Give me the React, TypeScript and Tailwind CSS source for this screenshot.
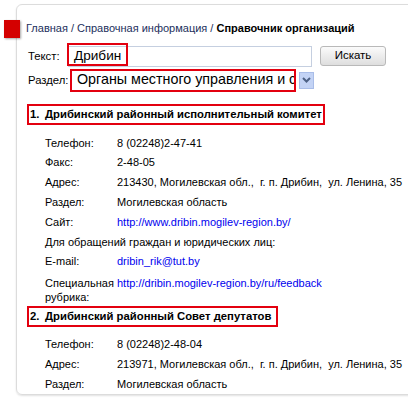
import React from 'react';

type Row = { label: string; value?: string; link?: boolean; full?: boolean };

const org1: Row[] = [
  { label: 'Телефон:', value: '8 (02248)2-47-41' },
  { label: 'Факс:', value: '2-48-05' },
  { label: 'Адрес:', value: '213430, Могилевская обл.,  г. п. Дрибин,  ул. Ленина, 35' },
  { label: 'Раздел:', value: 'Могилевская область' },
  { label: 'Сайт:', value: 'http://www.dribin.mogilev-region.by/', link: true },
  { label: 'Для обращений граждан и юридических лиц:', full: true },
  { label: 'E-mail:', value: 'dribin_rik@tut.by', link: true },
];

const org2: Row[] = [
  { label: 'Телефон:', value: '8 (02248)2-48-04' },
  { label: 'Адрес:', value: '213971, Могилевская обл.,  г. п. Дрибин,  ул. Ленина, 35' },
  { label: 'Раздел:', value: 'Могилевская область' },
];

function InfoRow({ row }: { row: Row }) {
  if (row.full) {
    return <div className="h-[19.8px] flex items-center pl-[28px] whitespace-pre">{row.label}</div>;
  }
  return (
    <div className="h-[19.8px] flex items-center">
      <div className="w-[100px] pl-[28px] shrink-0">{row.label}</div>
      <div className={`whitespace-pre ${row.link ? 'text-[#0000ee]' : ''}`}>{row.value}</div>
    </div>
  );
}

function Heading({ num, title, width }: { num: string; title: string; width: string }) {
  return (
    <div className={`ml-[10px] h-[21px] border-2 border-[#e3000f] flex items-center pl-[1px] font-bold text-[11.3px] whitespace-nowrap ${width}`}>
      <span className="w-[15px] shrink-0">{num}</span>
      <span>{title}</span>
    </div>
  );
}

export default function App() {
  return (
    <div className="w-[408px] h-[399px] bg-white overflow-hidden text-[11px] text-black" style={{ fontFamily: '"Liberation Sans", Arial, sans-serif' }}>
      <div className="pt-[4px] pl-[16px] relative">
        {/* red marker over the panel edge */}
        <div className="absolute left-[4px] top-[20px] w-[16px] h-[18px] bg-[#d40000] shadow-[1px_1px_2px_rgba(0,0,0,0.35)]" />
        <div className="h-[391px] w-[420px] border border-[#dcdcdc] rounded-[6px] shadow-[0_1px_2px_rgba(0,0,0,0.12)]">
          {/* breadcrumb */}
          <div className="pt-[15px] pl-[9px] h-[31px] leading-[16px] text-[#1c2f5c]">
            Главная / Справочная информация / <span className="font-bold text-black">Справочник организаций</span>
          </div>

          {/* search form */}
          <div className="pl-[11px] pt-[9px] text-[11.3px]">
            <div className="flex items-center h-[22px]">
              <span className="w-[40px]">Текст:</span>
              <div className="relative">
                <div className="w-[244px] h-[21px] border border-[#c5cfe0] bg-white flex items-center pl-[5px] text-[13.6px]">
                  Дрибин
                </div>
                <div className="absolute left-[-1px] top-[-3px] w-[61px] h-[23px] border-2 border-[#e3000f]" />
              </div>
              <button className="ml-[8px] w-[66px] h-[20px] rounded-[3px] border border-[#b9b9b9] bg-gradient-to-b from-[#fbfbfb] to-[#dedede] text-[11.5px]">
                Искать
              </button>
            </div>
            <div className="flex items-center h-[24px] mt-[1px]">
              <span className="w-[42px]">Раздел:</span>
              <div className="relative flex items-center">
                <div className="w-[226px] h-[23px] overflow-hidden whitespace-nowrap border-2 border-[#e3000f] flex items-center pl-[5px] text-[14.3px]">
                  Органы местного управления и самоуправления
                </div>
                <div className="ml-[3px] w-[15px] h-[17px] bg-[#c3d3f5] border border-[#a9bde8] flex items-center justify-center">
                  <svg width="9" height="6" viewBox="0 0 9 6">
                    <path d="M1 1 L4.5 4.5 L8 1" stroke="#4d6185" strokeWidth="2" fill="none" />
                  </svg>
                </div>
              </div>
            </div>
          </div>

          {/* results */}
          <div className="mt-[12px]">
            <Heading num="1." title="Дрибинский районный исполнительный комитет" width="w-[298px]" />
            <div className="mt-[8px]">
              {org1.map((r) => (
                <InfoRow key={r.label} row={r} />
              ))}
              <div className="flex pt-[4px] leading-[14px]">
                <div className="w-[100px] pl-[28px] shrink-0">
                  Специальная
                  <br />
                  рубрика:
                </div>
                <div className="text-[#0000ee]">http://dribin.mogilev-region.by/ru/feedback</div>
              </div>
            </div>
            <div className="mt-[2px]">
              <Heading num="2." title="Дрибинский районный Совет депутатов" width="w-[251px]" />
            </div>
            <div className="mt-[8px]">
              {org2.map((r) => (
                <InfoRow key={r.label} row={r} />
              ))}
            </div>
          </div>
        </div>
      </div>
    </div>
  );
}
